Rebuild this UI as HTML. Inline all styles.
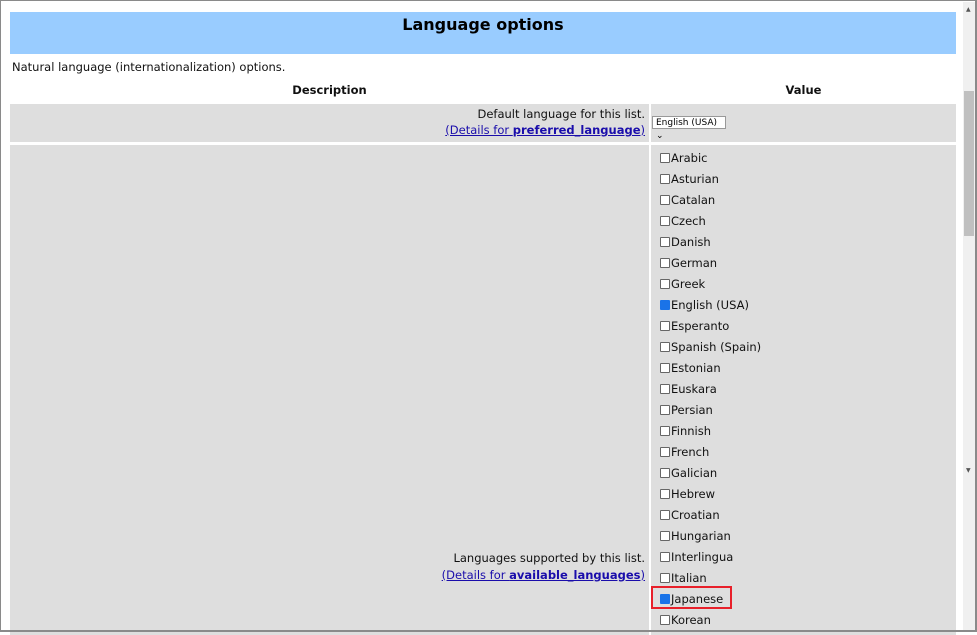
<!DOCTYPE html>
<html><head><meta charset="utf-8"><style>
body{margin:0;width:977px;height:632px;overflow:hidden;background:#fff;font-family:"DejaVu Sans","Liberation Sans",sans-serif;position:relative}
.a{position:absolute}
.frame{position:absolute;left:0;top:0;width:975px;height:630px;border:1px solid #8a8a8a;border-right:2px solid #8a8a8a;border-bottom:2px solid #8a8a8a;box-sizing:border-box;width:977px;height:632px;pointer-events:none}
.t{font-size:11.5px;color:#111;white-space:nowrap}
.cb{position:absolute;left:660px;width:8px;height:8px;border:1px solid #666;background:#fff;border-radius:1px}
.cb.on{background:#1a73e8;border-color:#1a73e8}
.lbl{position:absolute;left:671px;font-size:11.5px;color:#111}
a{color:#1a0dab}
</style></head><body>
<div class="a" style="left:10px;top:12px;width:946px;height:42px;background:#99ccff"></div>
<div class="a" style="left:10px;top:15px;width:946px;text-align:center;font-weight:bold;font-size:16px;color:#000">Language options</div>
<div class="a t" style="left:12px;top:60px">Natural language (internationalization) options.</div>
<div class="a t" style="left:10px;top:83px;width:639px;text-align:center;font-weight:bold">Description</div>
<div class="a t" style="left:651px;top:83px;width:305px;text-align:center;font-weight:bold">Value</div>
<div class="a" style="left:10px;top:104px;width:639px;height:38px;background:#dedede"></div>
<div class="a" style="left:651px;top:104px;width:305px;height:38px;background:#dedede"></div>
<div class="a" style="left:10px;top:145px;width:639px;height:490px;background:#dedede"></div>
<div class="a" style="left:651px;top:145px;width:305px;height:490px;background:#dedede"></div>
<div class="a t" style="right:332px;top:107px;text-align:right">Default language for this list.</div>
<div class="a t" style="right:332px;top:123px;text-align:right"><a href="#">(Details for <b>preferred_language</b>)</a></div>
<div class="a" style="left:652px;top:116px;width:72px;height:13px;background:#fff;border:1px solid #999;font-size:9px;line-height:13px;padding-left:3px;box-sizing:border-box;width:74px">English (USA) ⌄</div>
<div class="a t" style="right:332px;top:551px;text-align:right">Languages supported by this list.</div>
<div class="a t" style="right:332px;top:568px;text-align:right"><a href="#">(Details for <b>available_languages</b>)</a></div>
<div id="list"></div>
<div class="a" style="left:651px;top:586px;width:81px;height:23px;border:2px solid #e8202a;box-sizing:border-box"></div>
<div class="a" style="left:963px;top:2px;width:12px;height:628px;background:#f0f0f0"></div>
<div class="a" style="left:964px;top:91px;width:10px;height:145px;background:#c0c0c0"></div>
<div class="a" style="left:966px;top:6px;font-size:6px;color:#555">▲</div>
<div class="a" style="left:966px;top:467px;font-size:6px;color:#555">▼</div>
<div class="frame"></div>
<script>
var L=["Arabic","Asturian","Catalan","Czech","Danish","German","Greek","English (USA)","Esperanto","Spanish (Spain)","Estonian","Euskara","Persian","Finnish","French","Galician","Hebrew","Croatian","Hungarian","Interlingua","Italian","Japanese","Korean"];
var h="";L.forEach(function(n,i){var y=158+i*21;var on=(n=="English (USA)"||n=="Japanese");
h+='<div class="cb'+(on?' on':'')+'" style="top:'+(y-5)+'px"></div><div class="lbl" style="top:'+(y-7)+'px">'+n+'</div>';});
document.getElementById("list").innerHTML=h;
</script>
</body></html>
